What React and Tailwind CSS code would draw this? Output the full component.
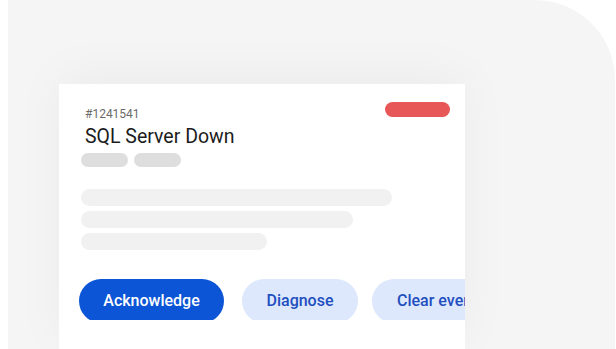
export default function App() {
  return (
    <div className="w-[616px] h-[349px] bg-white overflow-hidden pl-2 pr-px" style={{ fontFamily: 'Roboto, "Liberation Sans", sans-serif' }}>
      <div className="h-full bg-[#f5f5f5] rounded-tr-[80px] pl-[51px] pt-[84px]">
        {/* Incident card */}
        <div className="w-[406px] h-full bg-white shadow-[0_-8px_48px_rgba(0,0,0,0.045)] overflow-hidden pl-[22px] pr-[15px] pt-[18px]">
          <div className="flex justify-between items-start">
            <div className="pt-1">
              <div className="pl-1 text-[12px] leading-4 text-[#6b6b6b]">#1241541</div>
              <div className="pl-1 mt-[3px] text-[19.5px] leading-6 text-[#1c1c1c]">SQL Server Down</div>
              <div className="mt-[4px] flex gap-[6px]">
                <div className="w-[47px] h-[14px] rounded-full bg-[#dedede]" />
                <div className="w-[47px] h-[14px] rounded-full bg-[#dedede]" />
              </div>
            </div>
            <div className="w-[65px] h-[15px] rounded-full bg-[#e85757]" />
          </div>

          <div className="mt-[22px] flex flex-col gap-[5px]">
            <div className="w-[311px] h-[17px] rounded-full bg-[#f1f1f1]" />
            <div className="w-[272px] h-[17px] rounded-full bg-[#f1f1f1]" />
            <div className="w-[186px] h-[17px] rounded-full bg-[#f1f1f1]" />
          </div>

          <div className="mt-[29px] h-[41px] overflow-hidden flex -ml-[2px] -mr-[15px] whitespace-nowrap">
            <button className="shrink-0 h-[44px] w-[145px] rounded-full bg-[#0b55d6] text-white text-[16px] font-medium">Acknowledge</button>
            <button className="shrink-0 ml-[18px] h-[44px] w-[116px] rounded-full bg-[#dde8fc] text-[#1f4fbf] text-[16px] font-medium">Diagnose</button>
            <button className="shrink-0 ml-[14px] h-[44px] pl-[25px] pr-6 rounded-full bg-[#dde8fc] text-[#1f4fbf] text-[16px] font-medium">Clear event</button>
          </div>
        </div>
      </div>
    </div>
  );
}
